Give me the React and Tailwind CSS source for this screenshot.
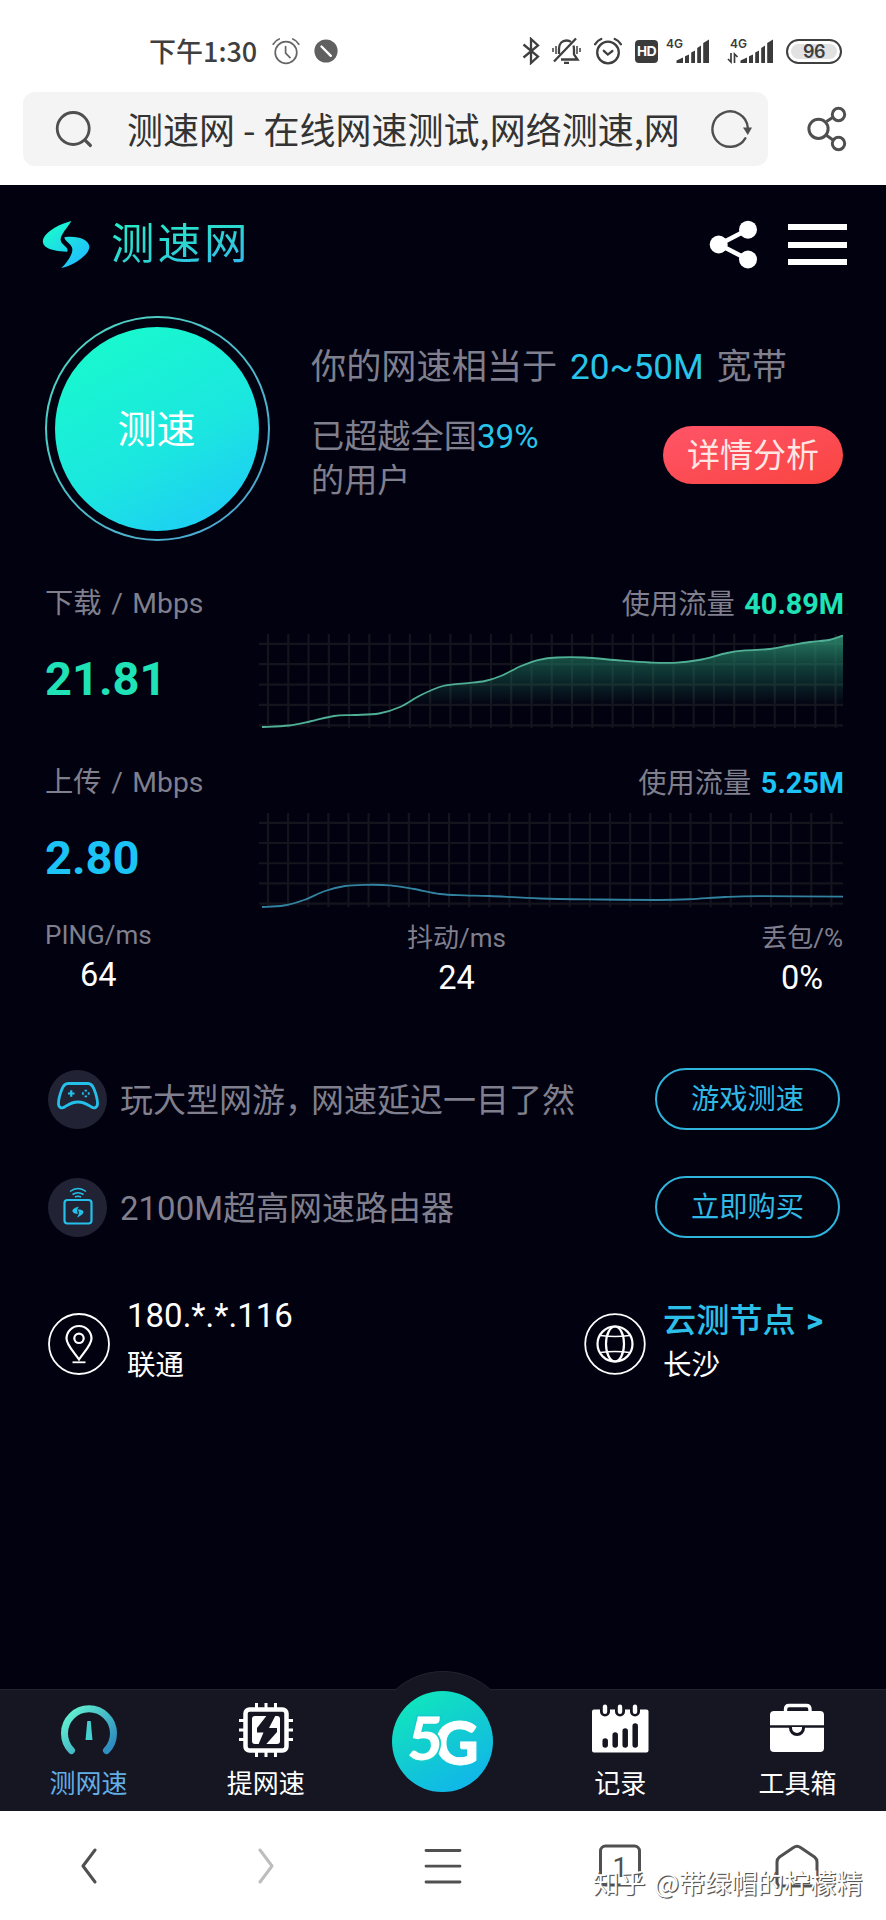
const tabs = [
    { label: '测网速', icon: GaugeIcon, active: true },
    { label: '提网速', icon: ChipIcon },
    { label: null },
    { label: '记录', icon: RecordIcon },
    { label: '工具箱', icon: ToolboxIcon },
];

const downloadPoints = [
    [3, 93], [30, 91.5], [51, 87.5], [75, 82], [95, 81], [120, 79.5], [141, 73], [162, 61], [184, 52],
    [206, 49.3], [226, 47], [243, 41.5], [262, 32], [280, 25.8], [298, 23.5], [325, 23.5], [361, 26.5],
    [391, 28.5], [415, 28.8], [440, 26], [468, 19], [486, 16.4], [511, 15], [530, 11.5], [551, 8], [570, 6], [584, 1.5],
];

const uploadPoints = [
    [3, 94], [25, 92.5], [45, 87], [66, 78], [86, 73], [106, 71.8], [131, 72.3], [155, 76], [181, 81],
    [206, 82.3], [231, 83], [281, 85.5], [341, 86.5], [400, 87], [431, 86.2], [466, 84], [501, 83.2], [584, 83.7],
];

// Catmull-Rom spline through the points, as cubic beziers
function smoothPath(points) {
    let d = `M${points[0][0]} ${points[0][1]}`;
    for (let i = 0; i < points.length - 1; i++) {
        const p0 = points[i - 1] || points[i];
        const p1 = points[i];
        const p2 = points[i + 1];
        const p3 = points[i + 2] || p2;
        d += ` C${p1[0] + (p2[0] - p0[0]) / 6} ${p1[1] + (p2[1] - p0[1]) / 6}`;
        d += ` ${p2[0] - (p3[0] - p1[0]) / 6} ${p2[1] - (p3[1] - p1[1]) / 6} ${p2[0]} ${p2[1]}`;
    }
    return d;
}

function SpeedChart({ id, points, color, step, fill }) {
    const line = smoothPath(points);
    return (
        <svg width="585" height="96" viewBox="0 0 585 96" fill="none">
            <defs>
                <linearGradient id={id} x1="0" y1="0" x2="0" y2="72" gradientUnits="userSpaceOnUse">
                    <stop offset="0" stopColor="#35a37f" stopOpacity="0.8" />
                    <stop offset="0.45" stopColor="#1f7a62" stopOpacity="0.5" />
                    <stop offset="1" stopColor="#1f7a62" stopOpacity="0" />
                </linearGradient>
            </defs>
            <g stroke="#14141d" strokeWidth="2.2">
                {Array.from({ length: 29 }, (_, i) => (
                    <path key={`v${i}`} d={`M${9 + i * step} 0V94`} />
                ))}
                {Array.from({ length: 5 }, (_, i) => (
                    <path key={`h${i}`} d={`M0 ${9.8 + i * (step + 0.1)}H584`} />
                ))}
            </g>
            {fill && <path d={`${line} L584 96 L3 96 Z`} fill={`url(#${id})`} />}
            <path d={line} stroke={color} strokeWidth="1.8" />
        </svg>
    );
}

function AlarmIcon({ check }) {
    return (
        <svg width="28" height="28" viewBox="0 0 28 28" fill="none" stroke="currentColor" strokeLinecap="round">
            <circle cx="14" cy="15.5" r="10.8" />
            <path d="M1.2 7.2Q3.5 3.4 7.2 2M26.8 7.2Q24.5 3.4 20.8 2" />
            {check ? <path d="M9.8 13.8L13.8 17.6L18.4 14" /> : <path d="M13.6 9.5V16.2L18 20.6" />}
        </svg>
    );
}

function SignalIcon({ arrows }) {
    return (
        <svg width="47" height="28" viewBox="0 0 47 28" fill="#3b3b3b">
            <text x="3" y="10.8" fontSize="12" fontWeight="600" fontFamily="Inter, sans-serif">4G</text>
            <path d="M13.5 26V23.5L20 20.5V26ZM22 19.3L26 17.5V26H22ZM28.2 15.5L32 13.5V26H28.2ZM34.2 11L38 8.5V26H34.2ZM40.2 6L46 2.5V26H40.2Z" />
            {arrows && (
                <path d="M4 16V25L1 22M7.5 26V17L10.5 20" fill="none" stroke="#3b3b3b" strokeWidth="1.7" />
            )}
        </svg>
    );
}

function StatusBar() {
    return (
        <div className="flex h-[92px] items-center pt-[10px] pl-[149px] text-[#3f3f3f]">
            <span className="w-[123px] pb-[2px] font-['Noto_Sans_CJK_SC',sans-serif] text-[27px] leading-none font-medium whitespace-nowrap">
                下午1:30
            </span>
            <div className="flex text-[#666] [stroke-width:1.7]"><AlarmIcon /></div>
            <svg className="ml-[14px]" width="24" height="24" viewBox="0 0 24 24">
                <circle cx="12" cy="12" r="11.6" fill="#606060" />
                <path d="M7.5 7.5L16.8 16.8" stroke="#fff" strokeWidth="2.4" strokeLinecap="round" />
            </svg>
            <svg className="ml-[184px]" width="18" height="28" viewBox="0 0 18 28" fill="none" stroke="currentColor" strokeWidth="2.3">
                <path d="M1.5 7.5L16 19.5L9 26V2L16 8.5L1.5 20.5" />
            </svg>
            <svg className="ml-[12px]" width="29" height="28" viewBox="0 0 29 28" fill="none" stroke="currentColor" strokeWidth="2.3">
                <path d="M7 17V12C7 6.5 10 3.5 14.5 3.5C16.5 3.5 18 4 19 5M21.5 8.5C22 10 22 11.5 22 13V17.5L25.5 22.5H9" />
                <path d="M2 24.5L24 1.5M12 25.8H17" />
                <path d="M4 9V17M1 11V15M25 9V17M28 11V15" strokeWidth="1.5" />
            </svg>
            <div className="ml-[13px] flex [stroke-width:2.3]"><AlarmIcon check /></div>
            <span className="ml-[13px] flex h-[23px] w-[23px] items-center justify-center rounded-[4px] bg-[#3b3b3b] font-['Liberation_Sans',sans-serif] text-[14px] font-bold tracking-[-0.5px] text-white">
                HD
            </span>
            <div className="ml-[5px] flex"><SignalIcon /></div>
            <div className="ml-[17px] flex"><SignalIcon arrows /></div>
            <div className="ml-[12px] flex h-[25px] w-[56px] items-center justify-center rounded-full border-[2px] border-[#3f3f3f] p-[3px]">
                <div className="flex h-full w-full items-center justify-center rounded-full bg-[#e2e2e2] font-['Inter',sans-serif] text-[18px] font-semibold tracking-[-0.5px]">
                    96
                </div>
            </div>
        </div>
    );
}

function AddressBar() {
    return (
        <div className="flex h-[74px] items-center pl-[23px]">
            <div className="flex h-full w-[745px] items-center rounded-[12px] bg-[#f4f4f4]">
                <svg className="ml-[32px]" width="38" height="38" viewBox="0 0 38 38" fill="none" stroke="#4f4f4f" strokeWidth="2.8" strokeLinecap="round">
                    <circle cx="18.2" cy="18.5" r="16" />
                    <path d="M30 30.2L35.4 35.5" strokeWidth="3.2" />
                </svg>
                <span className="ml-[34px] w-[563px] pb-[2px] font-['Noto_Sans_CJK_SC',sans-serif] text-[36px] leading-none whitespace-nowrap text-[#333]">
                    测速网 - 在线网速测试,网络测速,网
                </span>
                <svg className="ml-[19px]" width="44" height="40" viewBox="0 0 44 40" fill="none">
                    <path d="M36.3 29.3A17.7 17.7 0 1 1 38.8 18.5" stroke="#4f4f4f" strokeWidth="2.4" strokeLinecap="round" />
                    <path d="M34 18.5H43L38.8 26Z" fill="#4f4f4f" />
                </svg>
            </div>
            <svg className="ml-[38px]" width="42" height="46" viewBox="0 0 42 46" fill="none" stroke="#4f4f4f" strokeWidth="3">
                <circle cx="12.5" cy="22.8" r="9.6" />
                <circle cx="32.5" cy="8.5" r="6.2" />
                <circle cx="32.5" cy="37.5" r="6.2" />
                <path d="M20.5 15.5L27 11.3M20 29L27 34" />
            </svg>
        </div>
    );
}

function LogoMark() {
    return (
        <svg width="49" height="49" viewBox="0 0 50 50">
            <defs>
                <linearGradient id="mark" x1="0" y1="0" x2="40" y2="50" gradientUnits="userSpaceOnUse">
                    <stop offset="0.2" stopColor="#1bf5d2" />
                    <stop offset="0.9" stopColor="#1fc2fb" />
                </linearGradient>
            </defs>
            <g fill="url(#mark)">
                <path d="M30 1C19 3.5 5 11 1.5 18.5C-1 25.5 3.5 31.5 25.5 32.5C28.5 28 19 25.5 19 20C19 14.5 26 8 30 1Z" />
                <path d="M23 17.5C36 15.5 49 20 48.3 28C47.5 36 32 46.5 19.7 49C26 43 31 35.5 31 30C31 24.5 22 21 23 17.5Z" />
            </g>
        </svg>
    );
}

function SiteHeader() {
    return (
        <div className="flex h-[119px] items-center pr-[39px] pl-[42px]">
            <LogoMark />
            <span className="ml-[20px] bg-gradient-to-br from-[#22f0c8] via-[#2cd6d0] to-[#35b4f0] bg-clip-text text-[43.5px] leading-none font-normal tracking-[3px] text-transparent">
                测速网
            </span>
            <svg className="ml-auto" width="49" height="49" viewBox="0 0 49 49" fill="#fff">
                <path d="M10 24.5L39 9.5M10 24.5L39 39.5" stroke="#fff" strokeWidth="4.6" />
                <circle cx="9.7" cy="24.5" r="9" />
                <circle cx="39" cy="9.7" r="9" />
                <circle cx="39" cy="39.5" r="9" />
            </svg>
            <div className="ml-[30px] flex w-[59px] flex-col gap-[11.5px]">
                <div className="h-[6px] bg-white" />
                <div className="h-[6px] bg-white" />
                <div className="h-[6px] bg-white" />
            </div>
        </div>
    );
}

function Hero() {
    return (
        <div className="mt-[12px] flex h-[225px] pl-[45px]">
            <div className="h-[225px] w-[225px] rounded-full bg-gradient-to-br from-[#4fdcc0] to-[#4a9fd0] p-[2px]">
                <div className="flex h-full w-full items-center justify-center rounded-full bg-[#020110] pr-[2px]">
                    <div className="flex h-[204px] w-[204px] items-center justify-center rounded-full bg-[linear-gradient(150deg,#18fbcb_5%,#1be6e0_58%,#1fc6fb_100%)] pt-[3px] text-[39px] text-white">
                        测速
                    </div>
                </div>
            </div>
            <div className="ml-[41px] flex-1 text-[#7f7f8d]">
                <p className="mt-[24px] text-[35.2px] leading-[54px] [word-spacing:4px] whitespace-nowrap">
                    你的网速相当于 <span className="text-[#28c4ea]">20~50M</span> 宽带
                </p>
                <div className="mt-[21px] flex">
                    <p className="w-[352px] text-[33.2px] leading-[44px]">
                        已超越全国<span className="text-[#28c4ea]">39%</span>
                        <br />
                        的用户
                    </p>
                    <button className="mt-[11px] h-[58px] w-[180px] rounded-full bg-gradient-to-br from-[#ff5468] to-[#f9443f] pt-[2px] text-[33px] leading-[56px] whitespace-nowrap text-[#ffe6e4]">
                        详情分析
                    </button>
                </div>
            </div>
        </div>
    );
}

function SpeedBlock({ title, value, usage, textColor, className, children }) {
    return (
        <div className={className}>
            <div className="flex h-[34px] items-center justify-between pt-px text-[28.3px] [word-spacing:2.5px] text-[#7f7f8d]">
                <span>{title} / Mbps</span>
                <span>
                    使用流量 <b className={`text-[28.8px] ${textColor}`}>{usage}</b>
                </span>
            </div>
            <div className="mt-[13px] flex h-[96px] justify-between">
                <span className={`mt-[17px] text-[47px] leading-[56px] font-bold ${textColor}`}>{value}</span>
                {children}
            </div>
        </div>
    );
}

function Metric({ label, value, className }) {
    return (
        <div className={`flex flex-col items-center ${className}`}>
            <span className="text-[26px] leading-[32px] text-[#7f7f8d]">{label}</span>
            <span className="mt-[5px] text-[32.5px] leading-[38px] text-white">{value}</span>
        </div>
    );
}

function GamepadIcon() {
    return (
        <svg className="-mt-[6px]" width="42" height="30" viewBox="0 0 42 30" fill="none" stroke="#25c0ea" strokeWidth="2.8">
            <path d="M11 2.5H31C34 2.5 35.5 4.5 37 8C38.8 12.5 40.5 18 40.5 22.5C40.5 26.5 37.5 28 34.5 26C30.5 23.5 27.5 21 21 21C14.5 21 11.5 23.5 7.5 26C4.5 28 1.5 26.5 1.5 22.5C1.5 18 3.2 12.5 5 8C6.5 4.5 8 2.5 11 2.5Z" />
            <path d="M11 12.5H17.5M14.2 9.2V15.8" strokeWidth="2.2" />
            <path d="M28.8 8.7V10.5M28.8 14.5V16.3M25 12.5H26.8M30.8 12.5H32.6" strokeWidth="2.4" />
        </svg>
    );
}

function RouterIcon() {
    return (
        <svg className="-mt-[2px]" width="30" height="38" viewBox="0 0 30 38" fill="none" stroke="#25c0ea" strokeWidth="2.2">
            <path d="M7 4.5Q15 -1.5 23 4.5M9.5 7.5Q15 4 20.5 7.5M12 10Q15 8.5 18 10" strokeWidth="1.5" />
            <rect x="1.5" y="13" width="27" height="23.5" rx="3" />
            <path d="M16 19.5C11.5 20.5 9 22.5 9.5 24.5C10.5 26.5 13 26.8 15 26.8C14.5 24.5 13 23.5 16 19.5ZM14.5 22.5C18 22 21 23.5 20.5 25.5C19.5 28 16 29.5 14 30.5C16 27.5 17 25 14.5 22.5Z" fill="#25c0ea" stroke="none" />
        </svg>
    );
}

function PromoRow({ icon, action, className, children }) {
    return (
        <div className={`flex h-[62px] items-center ${className}`}>
            <div className="flex h-[59px] w-[59px] shrink-0 items-center justify-center rounded-full bg-[#212334]">
                {icon}
            </div>
            <span className="ml-[13px] pt-[2px] text-[33px] leading-none whitespace-nowrap text-[#7f7f8d]">{children}</span>
            <button className="ml-auto h-[62px] w-[185px] rounded-full border-[2.5px] border-[#2fb4dc] text-[28.3px] leading-[57px] whitespace-nowrap text-[#2fb9e4]">
                {action}
            </button>
        </div>
    );
}

function PinIcon() {
    return (
        <svg width="62" height="62" viewBox="0 0 62 62" fill="none" stroke="#fff" strokeWidth="1.8">
            <circle cx="31" cy="31" r="30" />
            <path d="M31 46.5C26 39 18.5 32 18.5 25.5A12.5 12.5 0 0 1 43.5 25.5C43.5 32 36 39 31 46.5Z" strokeWidth="2.2" />
            <circle cx="31" cy="25.3" r="4.7" strokeWidth="2.2" />
            <path d="M24.5 49.3H37.5" />
        </svg>
    );
}

function GlobeIcon() {
    return (
        <svg width="62" height="62" viewBox="0 0 62 62" fill="none" stroke="#fff" strokeWidth="1.8">
            <circle cx="31" cy="31" r="29.8" />
            <circle cx="31" cy="31" r="17.5" strokeWidth="2.2" />
            <ellipse cx="31" cy="31" rx="9" ry="17.5" strokeWidth="2.2" />
            <path d="M16.5 22.5Q31 24.5 45.5 22.5M16.5 39.5Q31 37.5 45.5 39.5" strokeWidth="1.5" />
        </svg>
    );
}

function ConnectionInfo() {
    return (
        <div className="mt-[56px] flex h-[100px] pl-[48px] text-white">
            <div className="mt-[19px]"><PinIcon /></div>
            <div className="ml-[17px] w-[458px]">
                <p className="text-[33px] leading-[44px]">180.*.*.116</p>
                <p className="mt-[8px] text-[28.5px] leading-[40px]">联通</p>
            </div>
            <div className="mt-[19px] -ml-px"><GlobeIcon /></div>
            <div className="ml-[17px] whitespace-nowrap">
                <p className="mt-[5px] text-[33.2px] leading-[44px] font-medium [word-spacing:2px] text-[#2cc0e8]">
                    云测节点 <b>&gt;</b>
                </p>
                <p className="mt-[3px] text-[28.5px] leading-[40px]">长沙</p>
            </div>
        </div>
    );
}

function GaugeIcon() {
    return (
        <svg width="58" height="56" viewBox="0 0 58 56" fill="none">
            <defs>
                <linearGradient id="gauge" x1="0" y1="0" x2="1" y2="0.8">
                    <stop offset="0.1" stopColor="#62f0d0" />
                    <stop offset="1" stopColor="#2f8fc0" />
                </linearGradient>
            </defs>
            <path d="M11.5 48.5A24.5 24.5 0 1 1 46.5 48.5" stroke="url(#gauge)" strokeWidth="7" strokeLinecap="round" />
            <path d="M27.3 19H30.7L32.5 38H25.5Z" fill="#45cfcf" />
        </svg>
    );
}

function ChipIcon() {
    return (
        <svg width="56" height="56" viewBox="0 0 56 56" fill="none">
            <path
                d="M18.5 1V7M28 1V7M37.5 1V7M18.5 49V55M28 49V55M37.5 49V55M1 18.5H7M1 28H7M1 37.5H7M49 18.5H55M49 28H55M49 37.5H55"
                stroke="#fff"
                strokeWidth="3"
            />
            <rect x="7.5" y="7.5" width="41" height="41" rx="4" stroke="#fff" strokeWidth="4.5" />
            <rect x="14" y="14" width="28" height="28" rx="3" fill="#fff" />
            <path d="M29.5 12.5L19 26V30.5H25.5L20 43.5H27L39 30V26H31L38 12.5Z" fill="#161622" />
        </svg>
    );
}

function RecordIcon() {
    return (
        <svg width="58" height="56" viewBox="0 0 58 56">
            <rect x="1" y="7.5" width="56.5" height="43" rx="2" fill="#fff" />
            {[14, 29, 44].map((x) => (
                <g key={x}>
                    <rect x={x - 5} y="0" width="10" height="14.5" rx="5" fill="#161622" />
                    <rect x={x - 2.2} y="2.5" width="4.4" height="9.5" rx="2.2" fill="#fff" />
                </g>
            ))}
            <path d="M14.2 39V43M24.2 33V43M34.2 29V43M44.2 24V43" stroke="#161622" strokeWidth="5.5" strokeLinecap="round" />
        </svg>
    );
}

function ToolboxIcon() {
    return (
        <svg width="56" height="56" viewBox="0 0 56 56">
            <path d="M16.5 11V7.5Q16.5 3.5 20 3.5H37.5Q41 3.5 41 7.5V11" fill="none" stroke="#fff" strokeWidth="3.4" />
            <rect x="1" y="9" width="54" height="41" rx="4" fill="#fff" />
            <path d="M0 24.5H56" stroke="#161622" strokeWidth="2.4" />
            <path d="M21.5 25V26A6.5 6.5 0 0 0 34.5 26V25" fill="#fff" stroke="#161622" strokeWidth="3" />
        </svg>
    );
}

function FiveGButton() {
    return (
        <div className="relative flex justify-center">
            <div className="absolute -top-[19px] h-[20px] w-[110px] overflow-hidden">
                <div className="-ml-[17px] h-[144px] w-[144px] rounded-full border border-[#23232f] bg-[#161622]" />
            </div>
            <div className="absolute top-px flex h-[101px] w-[101px] items-center justify-center rounded-full bg-[linear-gradient(150deg,#10e6bd_10%,#12cbd2_50%,#10b0f0_100%)]">
                <svg className="shrink-0" width="96" height="90" viewBox="0 0 96 90" fill="#fff" fontFamily="Lato, sans-serif" fontWeight="900">
                    <text x="39.5" y="68" fontSize="61" stroke="#fff" strokeWidth="1">G</text>
                    <text x="16" y="63" fontSize="60" stroke="#11d0cc" strokeWidth="3.5" paintOrder="stroke" transform="skewX(-4)">5</text>
                </svg>
            </div>
        </div>
    );
}

function TabBar() {
    return (
        <nav className="mt-auto grid h-[122px] grid-cols-5 border-t border-[#23232f] bg-[#161622]">
            {tabs.map(({ label, icon: Icon, active }, i) =>
                label ? (
                    <div key={i} className="flex flex-col items-center pt-[12px]">
                        <Icon />
                        <span className={`mt-[8px] text-[26px] leading-[36px] ${active ? 'text-[#62aee6]' : 'text-white'}`}>
                            {label}
                        </span>
                    </div>
                ) : (
                    <FiveGButton key={i} />
                )
            )}
        </nav>
    );
}

function BrowserBar() {
    return (
        <div className="relative grid h-[109px] grid-cols-5 items-center justify-items-center bg-white">
            <svg width="16" height="36" viewBox="0 0 16 36" fill="none" stroke="#505050" strokeWidth="3" strokeLinecap="round" strokeLinejoin="round">
                <path d="M14 2L2 18L14 34" />
            </svg>
            <svg width="16" height="36" viewBox="0 0 16 36" fill="none" stroke="#bdbdbd" strokeWidth="3" strokeLinecap="round" strokeLinejoin="round">
                <path d="M2 2L14 18L2 34" />
            </svg>
            <svg width="38" height="36" viewBox="0 0 38 36" fill="none" stroke="#505050" strokeWidth="2.8" strokeLinecap="round">
                <path d="M2 2.5H36M2 18.2H36M2 34H36" />
            </svg>
            <svg width="42" height="44" viewBox="0 0 42 44" fill="none">
                <rect x="1.5" y="2" width="39" height="39" rx="5" stroke="#505050" strokeWidth="3" />
                <text x="21" y="33" textAnchor="middle" fontSize="27" fontFamily="Roboto, sans-serif" fill="#505050">1</text>
            </svg>
            <svg width="44" height="44" viewBox="0 0 44 44" fill="none" stroke="#505050" strokeWidth="3" strokeLinejoin="round">
                <path d="M18.5 3.5Q22 1 25.5 3.5L39.5 13Q42 15 42 18V38Q42 42 38 42H6Q2 42 2 38V18Q2 15 4.5 13Z" />
            </svg>
            <span className="absolute top-[52px] left-[593px] font-['Noto_Sans_CJK_SC',sans-serif] text-[26.2px] leading-[38px] [word-spacing:3px] whitespace-nowrap text-white [text-shadow:1px_1px_0_#555,1px_1px_1px_#777]">
                知乎 @带绿帽的柠檬精
            </span>
        </div>
    );
}

export default function App() {
    return (
        <div className="flex h-[1920px] w-[886px] flex-col overflow-hidden bg-white font-['Roboto','Noto_Sans_CJK_SC',sans-serif]">
            <header className="h-[185px]">
                <StatusBar />
                <AddressBar />
            </header>

            <main className="flex h-[1626px] flex-col bg-[#020110]">
                <SiteHeader />
                <Hero />

                <SpeedBlock title="下载" value="21.81" usage="40.89M" textColor="text-[#1fe2b6]" className="mt-[46px] pr-[42px] pl-[45px]">
                    <SpeedChart id="down" points={downloadPoints} color="#4fb095" step={20.27} fill />
                </SpeedBlock>
                <SpeedBlock title="上传" value="2.80" usage="5.25M" textColor="text-[#1cc4f6]" className="mt-[36px] pr-[42px] pl-[45px]">
                    <SpeedChart id="up" points={uploadPoints} color="#3283a0" step={20.12} />
                </SpeedBlock>

                <div className="mt-[10px] flex h-[80px] justify-between pr-[43px] pl-[45px]">
                    <Metric label="PING/ms" value="64" />
                    <Metric label="抖动/ms" value="24" className="mt-[3px]" />
                    <Metric label="丢包/%" value="0%" className="mt-[3px]" />
                </div>

                <PromoRow icon={<GamepadIcon />} action="游戏测速" className="mt-[69px] pr-[46px] pl-[48px]">
                    玩大型网游<span className="tracking-[-7px]">，</span>网速延迟一目了然
                </PromoRow>
                <PromoRow icon={<RouterIcon />} action="立即购买" className="mt-[46px] pr-[46px] pl-[48px]">
                    2100M超高网速路由器
                </PromoRow>

                <ConnectionInfo />
                <TabBar />
            </main>

            <BrowserBar />
        </div>
    );
}
